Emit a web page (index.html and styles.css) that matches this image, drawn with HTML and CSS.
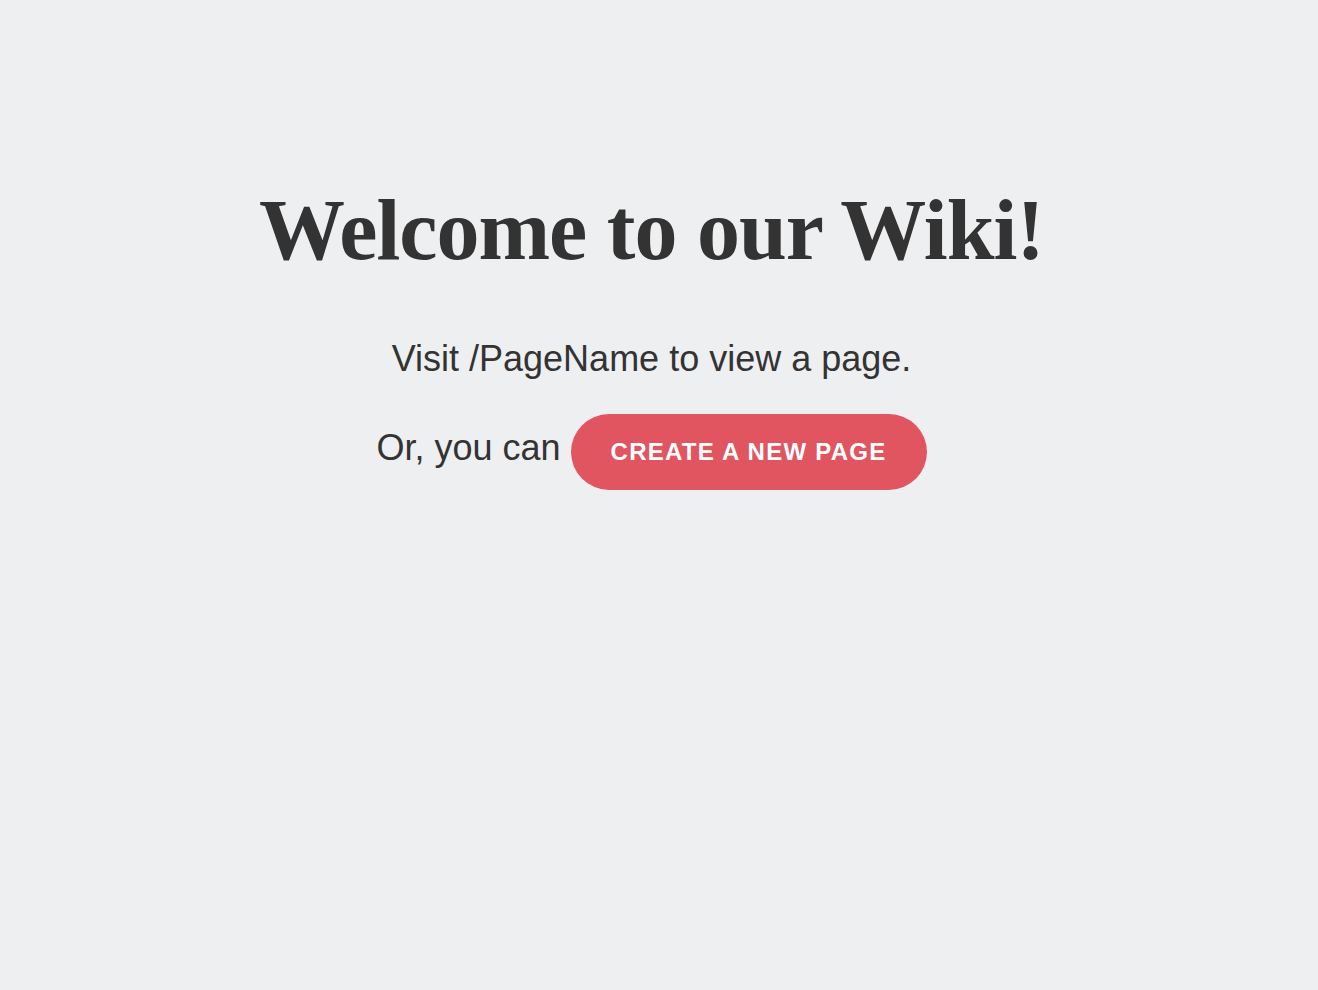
FILE: index.html
```html
<!DOCTYPE html>
<html lang="en">
<head>
<meta charset="utf-8">
<title>Wiki</title>
<link rel="stylesheet" href="styles.css">
</head>
<body>
<main class="welcome">
  <h1 class="welcome-title">Welcome to our Wiki!</h1>
  <p class="welcome-text">Visit /PageName to view a page.</p>
  <p class="welcome-text">Or, you can <a class="btn-create" href="#">Create a new page</a></p>
</main>
</body>
</html>
```

FILE: styles.css
```css
html, body {
  margin: 0;
  padding: 0;
  background: #eeeff1;
}

body {
  font-family: "Liberation Sans", Arial, Helvetica, sans-serif;
  color: #333333;
}

.welcome {
  text-align: center;
  padding: 187px 15px 0 0;
}

.welcome-title {
  font-family: "Liberation Serif", "Times New Roman", serif;
  font-weight: bold;
  font-size: 86px;
  line-height: 1;
  margin: 0 0 64px;
  letter-spacing: -1px;
}

.welcome-text {
  font-size: 36px;
  line-height: 1.2;
  margin: 0 0 34px;
}

.btn-create {
  display: inline-block;
  background: #e05560;
  color: #ffffff;
  text-decoration: none;
  text-transform: uppercase;
  font-weight: bold;
  font-size: 24px;
  letter-spacing: 1.25px;
  line-height: 76px;
  padding: 0 40px;
  border-radius: 38px;
}
```
